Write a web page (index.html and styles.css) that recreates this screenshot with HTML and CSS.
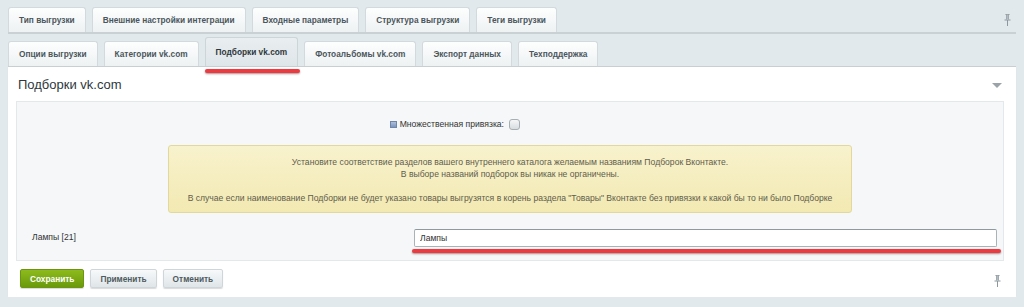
FILE: index.html
```html
<!DOCTYPE html>
<html lang="ru">
<head>
  <meta charset="UTF-8" />
  <title>Подборки vk.com</title>
  <link rel="stylesheet" href="styles.css">
</head>
<body>
  <div class="page">
    <!-- Top tabs -->
    <div class="tabs-top">
      <div class="tab">Тип выгрузки</div>
      <div class="tab">Внешние настройки интеграции</div>
      <div class="tab">Входные параметры</div>
      <div class="tab">Структура выгрузки</div>
      <div class="tab">Теги выгрузки</div>
      <span class="pin pin-top">
        <svg width="7" height="12" viewBox="0 0 7 12"><path d="M1.5 0.5h4M2.5 0.5v5M4.5 0.5v5M0.5 6h6M3.5 6v6" stroke="#8d989e" stroke-width="1" fill="none"/><rect x="2.5" y="0.5" width="2" height="5" fill="#b3bcc1"/></svg>
      </span>
    </div>

    <!-- Sub tabs -->
    <div class="tabs-sub">
      <div class="tab">Опции выгрузки</div>
      <div class="tab">Категории vk.com</div>
      <div class="tab active">Подборки vk.com<span class="mark"></span></div>
      <div class="tab">Фотоальбомы vk.com</div>
      <div class="tab">Экспорт данных</div>
      <div class="tab">Техподдержка</div>
    </div>

    <div class="panel">
      <div class="panel-head">
        <h1 class="panel-title">Подборки vk.com</h1>
        <span class="arrow"></span>
      </div>

      <div class="panel-body">
        <div class="multi-row">
          <div class="multi-label">
            <span class="hint-box"></span>
            <span>Множественная привязка:</span>
          </div>
          <div class="multi-value">
            <span class="checkbox"></span>
          </div>
        </div>

        <div class="note">
          <p>Установите соответствие разделов вашего внутреннего каталога желаемым названиям Подборок Вконтакте.</p>
          <p>В выборе названий подборок вы никак не органичены.</p>
          <p class="note-gap">В случае если наименование Подборки не будет указано товары выгрузятся в корень раздела "Товары" Вконтакте без привязки к какой бы то ни было Подборке</p>
        </div>

        <div class="field-row">
          <div class="field-label">Лампы [21]</div>
          <div class="field-value">
            <input type="text" value="Лампы" />
            <span class="mark mark-wide"></span>
          </div>
        </div>
      </div>

      <div class="buttons">
        <button class="btn btn-save">Сохранить</button>
        <button class="btn">Применить</button>
        <button class="btn">Отменить</button>
        <span class="pin pin-bottom">
          <svg width="7" height="12" viewBox="0 0 7 12"><path d="M1.5 0.5h4M2.5 0.5v5M4.5 0.5v5M0.5 6h6M3.5 6v6" stroke="#8d989e" stroke-width="1" fill="none"/><rect x="2.5" y="0.5" width="2" height="5" fill="#b3bcc1"/></svg>
        </span>
      </div>
    </div>
  </div>
</body>
</html>
```

FILE: styles.css
```css
* {
  margin: 0;
  padding: 0;
  box-sizing: border-box;
  font-family: 'Liberation Sans', Arial, sans-serif;
}

body {
  background-color: #e2e9ec;
  color: #333;
  overflow: hidden;
}

.page {
  padding: 7px 8px 0 8px;
}

/* Tabs */
.tabs-top {
  display: flex;
  align-items: flex-end;
  gap: 6px;
  border-bottom: 2px solid #c9d1d5;
}

.tabs-sub {
  display: flex;
  align-items: flex-end;
  gap: 6px;
  margin-top: 3px;
}

.tab {
  height: 25px;
  padding: 0 10px;
  display: flex;
  align-items: center;
  font-size: 8.3px;
  font-weight: 700;
  color: #4b565c;
  background: linear-gradient(#fdfefe, #eef2f3);
  border: 1px solid #d3dadd;
  border-bottom: none;
  border-radius: 3px 3px 0 0;
  white-space: nowrap;
}

.tabs-sub .tab.active {
  position: relative;
  height: 29px;
  color: #2e373c;
  background: linear-gradient(#e9eef0, #dfe6e9);
  border-color: #cdd5d9;
}

/* red annotation strokes */
.mark {
  position: absolute;
  left: -1px;
  right: -3px;
  bottom: -7px;
  height: 4px;
  background: #ec3a40;
  border-radius: 2px;
  box-shadow: 0 1px 2px rgba(60, 20, 20, 0.45);
}

.pin {
  display: flex;
}

.pin-top {
  margin-left: auto;
  align-self: center;
  margin-right: 5px;
}

/* Panel */
.panel {
  background: #fff;
  border-top: 1px solid #c7cfd3;
  padding: 0 12px 9px 8px;
  box-shadow: 0 1px 1px rgba(0, 0, 0, 0.05);
}

.panel-head {
  height: 34px;
  display: flex;
  align-items: center;
  justify-content: space-between;
  padding: 0 1px 0 2px;
}

.panel-title {
  font-size: 13px;
  font-weight: 400;
  color: #2d373c;
}

.arrow {
  width: 0;
  height: 0;
  border-left: 5px solid transparent;
  border-right: 5px solid transparent;
  border-top: 5px solid #9aa3a8;
  margin-top: 2px;
  margin-right: 1px;
}

.panel-body {
  background: #f5f7f8;
  border: 1px solid #e3e8eb;
  padding: 15px 6px 13px 15px;
}

.multi-row {
  display: flex;
  align-items: center;
  height: 14px;
  font-size: 8.6px;
  color: #333;
}

.multi-label {
  width: 474px;
  display: flex;
  justify-content: flex-end;
  align-items: center;
  gap: 3px;
  padding-right: 2px;
}

.multi-value {
  display: flex;
  padding-left: 3px;
}

.hint-box {
  width: 7px;
  height: 7px;
  border: 1px solid #6f86a8;
  background: linear-gradient(#aebfdb, #7c95c0);
}

.checkbox {
  width: 11px;
  height: 11px;
  border: 1px solid #a7afb3;
  border-radius: 3px;
  background: linear-gradient(#f5f6f7, #d8dde0);
}

.note {
  width: 684px;
  margin: 14px 0 0 136px;
  padding: 10px 10px 8px;
  background: linear-gradient(#f8f2cd, #f2e9b2);
  border: 1px solid #e2d89d;
  border-radius: 3px;
  text-align: center;
  font-size: 8.6px;
  line-height: 12px;
  color: #5f5d4d;
}

.note-gap {
  margin-top: 12px;
}

.field-row {
  display: flex;
  align-items: center;
  margin-top: 14px;
}

.field-label {
  width: 382px;
  font-size: 8.6px;
  color: #333;
  flex-shrink: 0;
}

.field-value {
  position: relative;
  flex: 1;
}

.field-value input {
  width: 100%;
  height: 18px;
  padding: 0 5px;
  font-size: 8.6px;
  color: #333;
  border: 1px solid #a9b2b7;
  border-top-color: #8f999e;
  border-radius: 2px;
  background: #fff;
}

.mark-wide {
  left: -2px;
  right: -4px;
  bottom: -6px;
}

/* Buttons */
.buttons {
  display: flex;
  align-items: center;
  gap: 6px;
  margin-top: 8px;
  padding-left: 4px;
}

.btn {
  height: 19px;
  padding: 0 9px;
  font-size: 8.3px;
  font-weight: 700;
  color: #4f5b61;
  background: linear-gradient(#f7f9fa, #dfe5e8);
  border: 1px solid #cfd6da;
  border-radius: 2px;
  box-shadow: 0 1px 1px rgba(0, 0, 0, 0.15);
}

.btn-save {
  color: #fff;
  background: linear-gradient(#8dbb1c, #6a990c);
  border-color: #6b9510;
}

.pin-bottom {
  margin-left: auto;
  margin-right: 3px;
  margin-top: 4px;
}
```
